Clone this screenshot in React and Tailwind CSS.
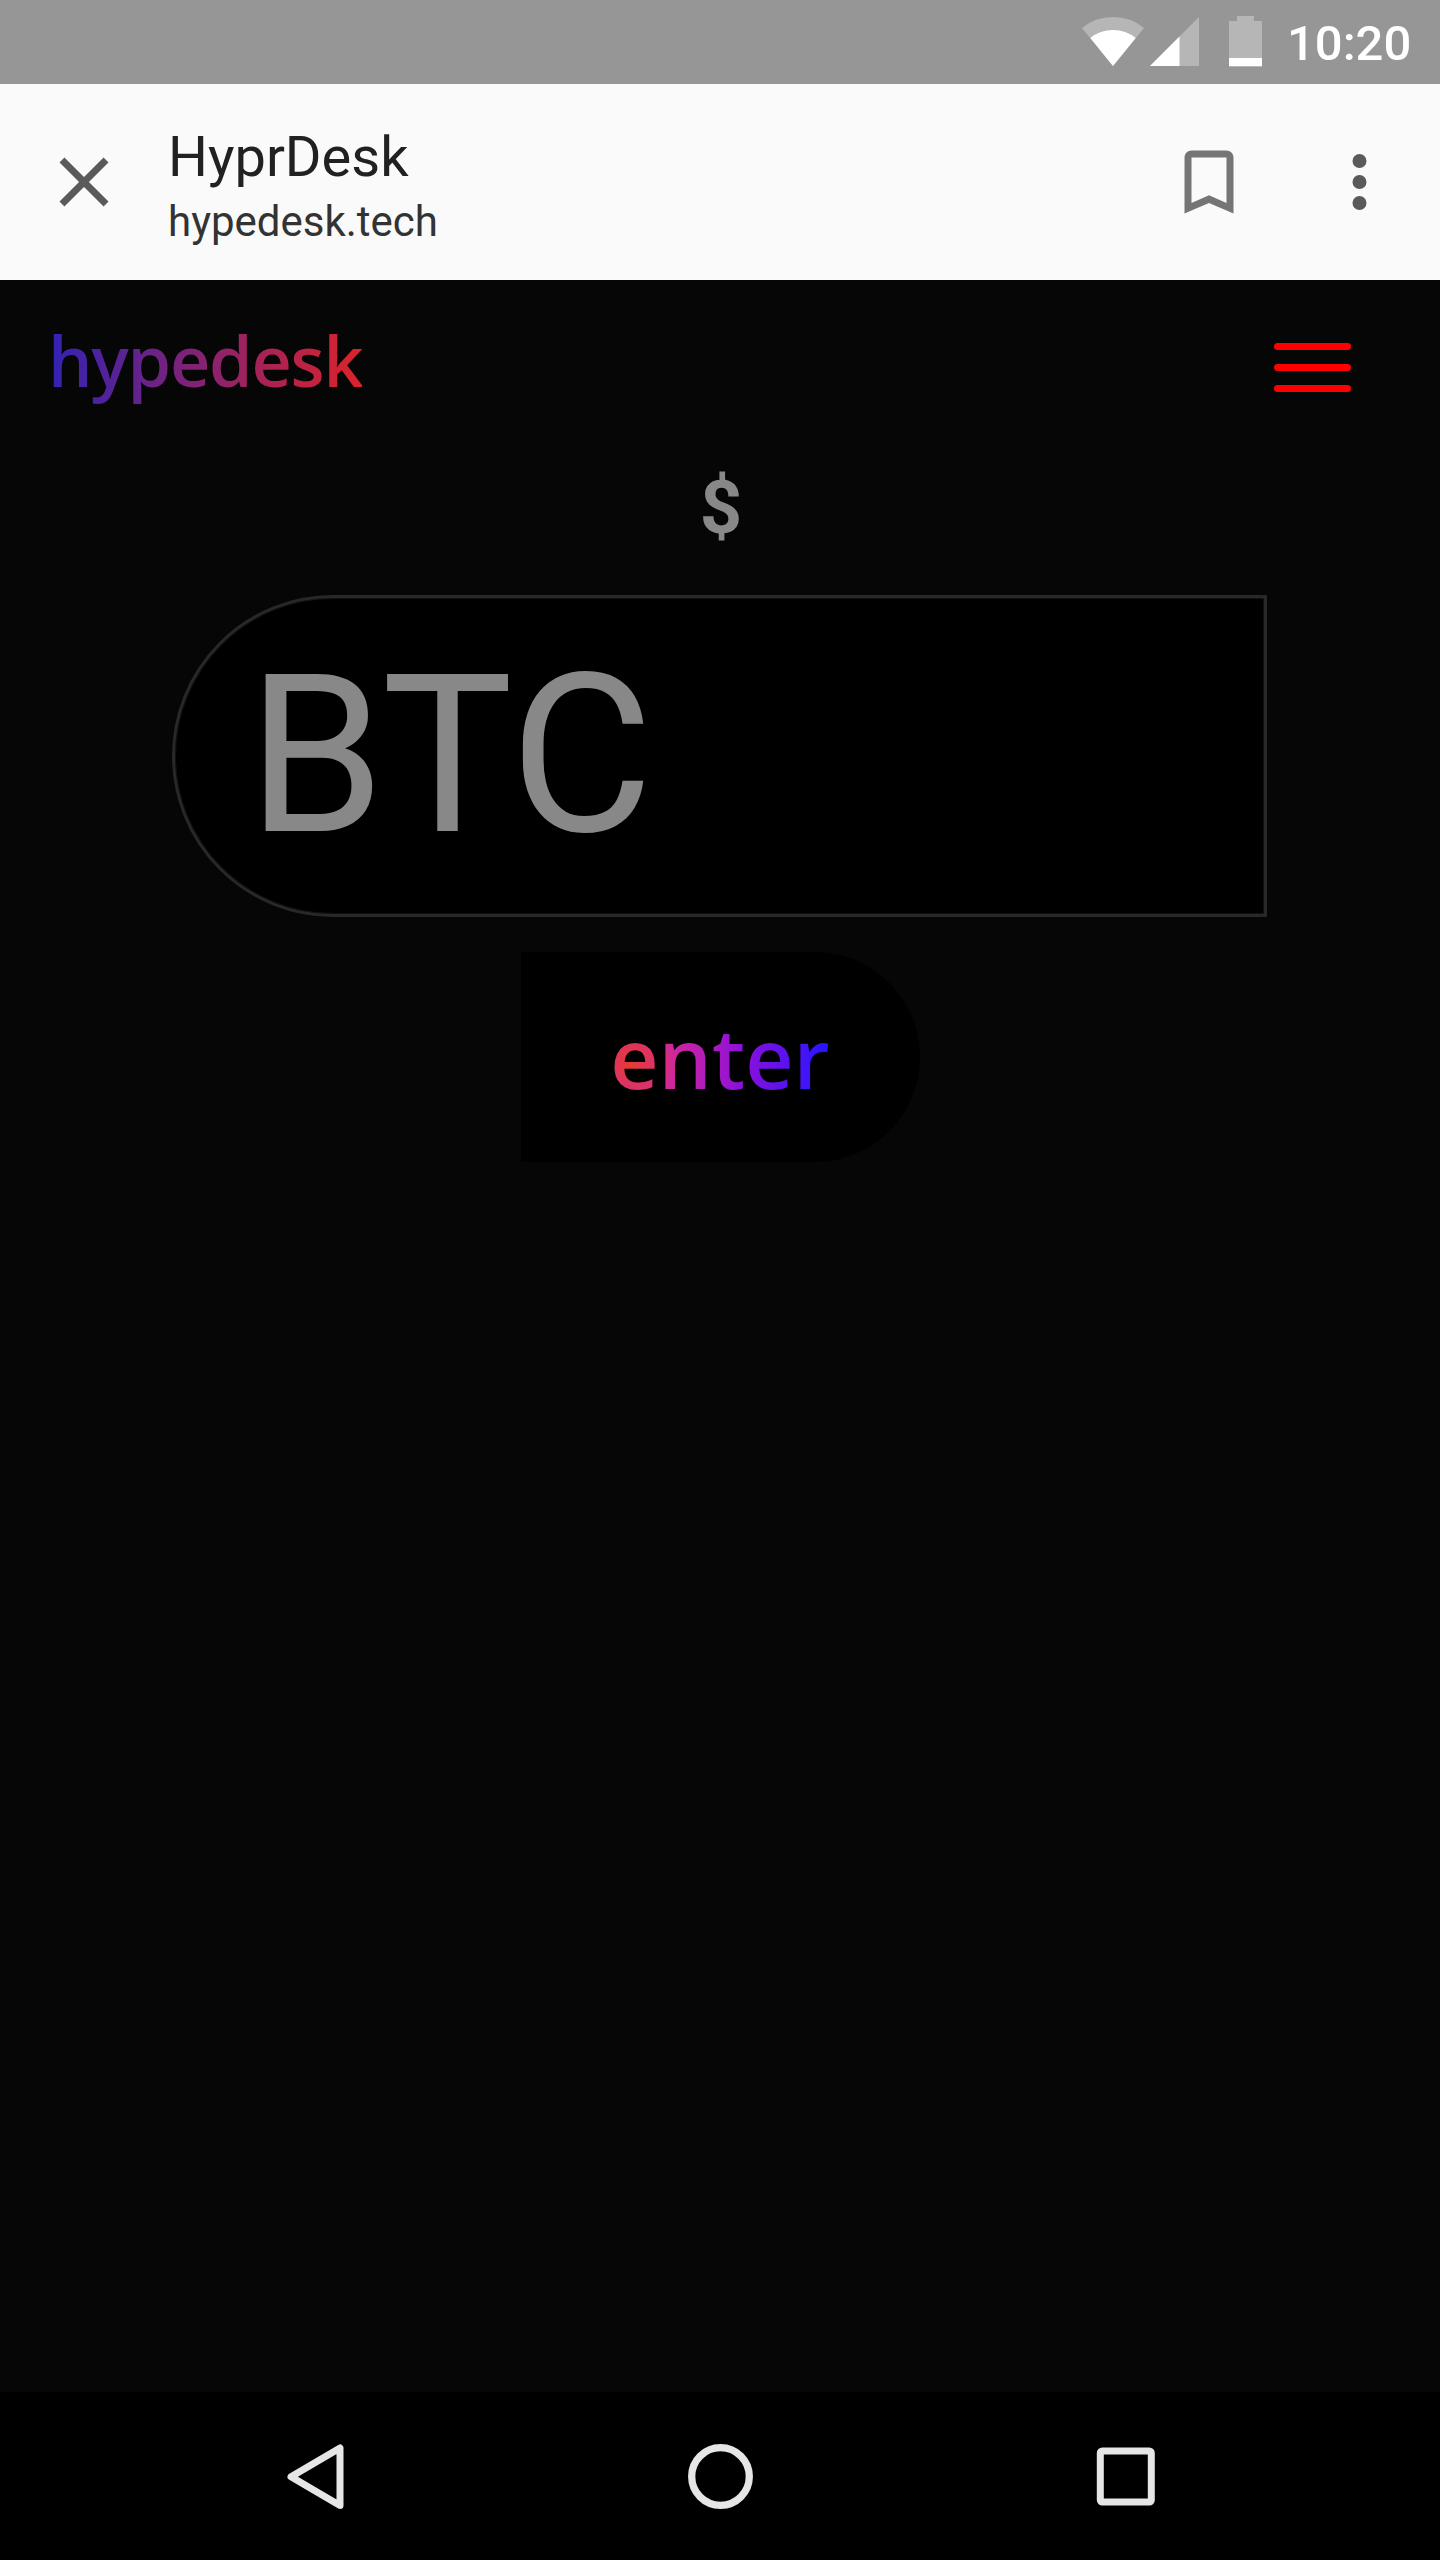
const StatusBar = () => (
  <div className="flex h-[84px] items-start bg-[#969696] text-white">
    <svg className="ml-[1080px] h-[84px] w-[184px] shrink-0" viewBox="1080 0 184 84">
      <path d="M1113 66 L1082 28 Q1095 17 1113 17 Q1131 17 1144 28 Z" fill="#b6b6b6" />
      <path d="M1113 66 L1090.3 38 Q1100 30 1113 30 Q1126 30 1135.7 38 Z" fill="#fff" />
      <path d="M1150 66 L1199 17 V66 Z" fill="#b6b6b6" />
      <path d="M1150 66 L1179.5 36.5 V66 Z" fill="#fff" />
      <path d="M1237 16 H1254 V21 H1262 V67 H1229 V21 H1237 Z" fill="#b6b6b6" />
      <path d="M1229 58 H1262 V66 H1229 Z" fill="#fff" />
    </svg>
    <span className="ml-[23px] mt-[16px] text-[49px] font-medium leading-[56px]">10:20</span>
  </div>
);

const BrowserBar = () => (
  <header className="flex h-[196px] bg-[#fafafa]">
    <svg className="ml-[42px] mt-[56px] size-[84px] shrink-0" viewBox="0 0 24 24" fill="#5a5a5a">
      <path d="M19 6.41L17.59 5 12 10.59 6.41 5 5 6.41 10.59 12 5 17.59 6.41 19 12 13.41 17.59 19 19 17.59 13.41 12z" />
    </svg>
    <div className="ml-[42px] mt-[40px] flex flex-1 flex-col">
      <h1 className="text-[56px] leading-[66px] text-[#212121]">HyprDesk</h1>
      <p className="mt-[7px] text-[42px] leading-[49px] text-[#333]">hypedesk.tech</p>
    </div>
    <svg className="mt-[56px] size-[84px] shrink-0" viewBox="0 0 24 24" fill="#757575">
      <path d="M17 3H7c-1.1 0-1.990.9-1.990 2L5 21l7-3 7 3V5c0-1.100-.9-2-2-2zm0 15l-5-2.180L7 18V5h10v13z" />
    </svg>
    <svg className="ml-[66px] mr-[39px] mt-[56px] size-[84px] shrink-0" viewBox="0 0 24 24" fill="#5a5a5a">
      <circle cx="12.140" cy="6" r="2" />
      <circle cx="12.140" cy="12" r="2" />
      <circle cx="12.140" cy="18" r="2" />
    </svg>
  </header>
);

const NavBar = () => (
  <nav className="flex h-[168px] items-center bg-black">
    <svg className="ml-[285px] h-[70px] w-[62px]" viewBox="285 2441 62 70" fill="none" stroke="#e6e6e6" strokeWidth="7" strokeLinejoin="round">
      <path d="M340 2448 V2505.500 L291 2476.700 Z" />
    </svg>
    <svg className="ml-[338px] size-[70px]" viewBox="0 0 70 70" fill="none" stroke="#e6e6e6" strokeWidth="7.300">
      <circle cx="35.500" cy="35.500" r="28.800" />
    </svg>
    <svg className="ml-[335px] size-[70px]" viewBox="0 0 70 70" fill="none" stroke="#e6e6e6" strokeWidth="7">
      <rect x="10.300" y="10" width="51" height="51" rx="2" />
    </svg>
  </nav>
);

export default function App() {
  return (
    <div className="flex h-[2560px] w-[1440px] flex-col overflow-hidden bg-[#060606] font-['Roboto',sans-serif]">
      <StatusBar />
      <BrowserBar />
      <main className="flex flex-1 flex-col items-center">
        <div className="flex w-full items-start justify-between pl-[48px] pr-[89px]">
          <span className="mt-[30px] bg-[linear-gradient(to_right,#3222b4,#dc232a)] bg-clip-text font-['Open_Sans',sans-serif] text-[70px] font-semibold leading-[100px] tracking-[-1.200px] text-transparent">
            hypedesk
          </span>
          <button className="mt-[63px] flex w-[77px] flex-col gap-[14px]" aria-label="Menu">
            <span className="h-[7px] w-full rounded-full bg-[#f00]" />
            <span className="h-[7px] w-full rounded-full bg-[#f00]" />
            <span className="h-[7px] w-full rounded-full bg-[#f00]" />
          </button>
        </div>
        <div className="ml-[2px] mt-[53px] h-[90px] text-[74px] font-bold leading-[90px] text-[#888]">$</div>
        <div className="mr-[2px] mt-[42px] flex h-[322px] w-[1095px] items-center rounded-l-[161px] border-3 border-[#282828] bg-black pb-px pl-[73px] text-[220px] leading-none text-[#888] shadow-[inset_0_0_0_1px_#111]">
          BTC
        </div>
        <button className="mt-[35px] flex h-[210px] w-[399px] items-center justify-center rounded-r-[105px] bg-black">
          <span className="bg-[radial-gradient(circle_at_21px_61px,#e63a30_0px,#d8307a_32px,#cf25a0_46px,#b01cba_76px,#8c10da_112px,#6012ec_150px,#3c14fa_180px,#1414ff_208px)] bg-clip-text font-['Open_Sans',sans-serif] text-[84px] font-semibold leading-[110px] text-transparent">
            enter
          </span>
        </button>
      </main>
      <NavBar />
    </div>
  );
}
